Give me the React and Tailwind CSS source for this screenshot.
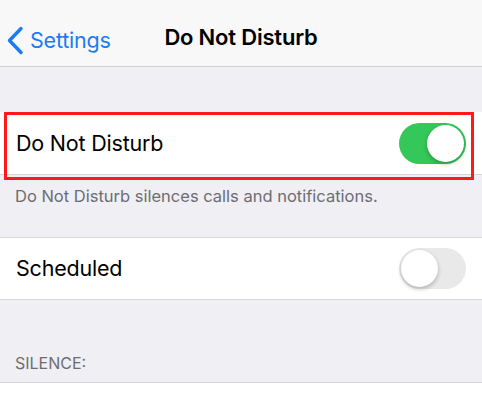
import { useState } from "react";

const Toggle = ({ on, onChange }) => (
  <button
    onClick={() => onChange(!on)}
    className={`relative w-[67px] h-[41px] rounded-full shrink-0 transition-colors ${
      on ? "bg-[#34c759]" : "bg-[#e9e9ea]"
    }`}
  >
    <span
      className={`absolute top-[2px] w-[37px] h-[37px] rounded-full bg-white shadow-[0_2px_4px_rgba(0,0,0,0.25)] transition-all ${
        on ? "left-[28px]" : "left-[2px]"
      }`}
    />
  </button>
);

const App = () => {
  const [dnd, setDnd] = useState(true);
  const [scheduled, setScheduled] = useState(false);

  return (
    <div className="w-[482px] h-[400px] overflow-hidden bg-[#efeff4] font-['Inter',sans-serif]">
      {/* nav bar */}
      <div className="relative h-[67px] bg-[#f8f8f8] border-b border-[#d0d0d4] flex items-center justify-center pt-[9px]">
        <button className="absolute left-[6px] top-[24px] flex items-center text-[#1a7cf5]">
          <svg width="18" height="29" viewBox="0 0 18 29" fill="none">
            <path
              d="M15 2.5 L3.5 14.5 L15 26.5"
              stroke="currentColor"
              strokeWidth="3.4"
              strokeLinecap="round"
              strokeLinejoin="round"
            />
          </svg>
          <span className="ml-[6px] text-[21.5px] tracking-[-0.2px]">Settings</span>
        </button>
        <h1 className="text-[22px] font-semibold text-black tracking-[-0.2px]">Do Not Disturb</h1>
      </div>

      <div className="h-[45px]" />

      {/* highlighted row */}
      <div className="relative">
        <div className="h-[63px] bg-white border-b border-[#d6d6da] flex items-center justify-between pl-[16px] pr-[16px]">
          <span className="text-[21.5px] text-black tracking-[-0.2px]">Do Not Disturb</span>
          <Toggle on={dnd} onChange={setDnd} />
        </div>
        <div className="absolute left-[4px] right-[8px] top-0 h-[68px] border-[3px] border-[#ff1a1a] pointer-events-none" />
      </div>

      <div className="h-[62px] pl-[15px] pt-[9px]">
        <p className="text-[16.5px] text-[#6d6d72]">Do Not Disturb silences calls and notifications.</p>
      </div>

      <div className="h-[63px] bg-white border-y border-[#d6d6da] flex items-center justify-between pl-[16px] pr-[16px]">
        <span className="text-[21.5px] text-black tracking-[-0.2px]">Scheduled</span>
        <Toggle on={scheduled} onChange={setScheduled} />
      </div>

      <div className="h-[82px] flex items-end pl-[15px] pb-[7px]">
        <span className="text-[16px] text-[#6d6d72]">SILENCE:</span>
      </div>

      <div className="h-[40px] bg-white border-t border-[#d6d6da]" />
    </div>
  );
};

export default App;
